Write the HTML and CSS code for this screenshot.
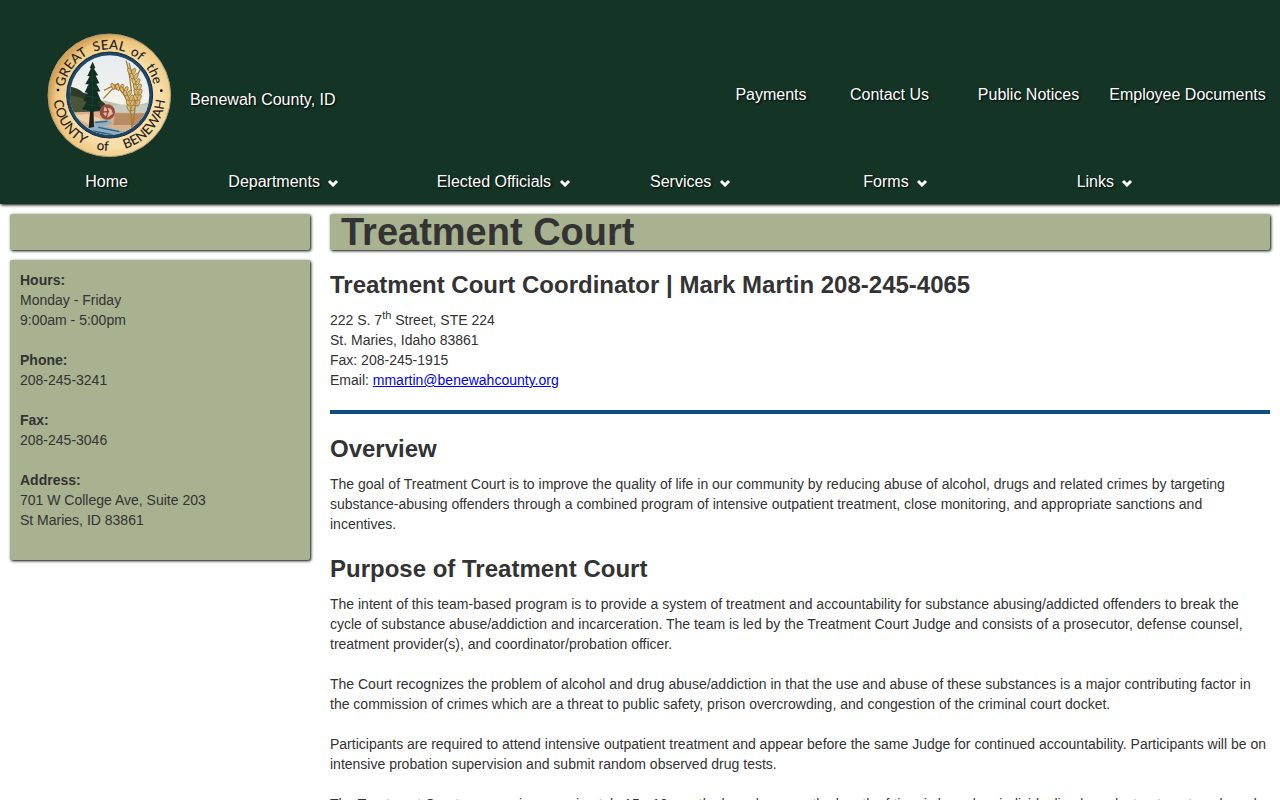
FILE: index.html
```html
<!DOCTYPE html>
<html lang="en">
<head>
<meta charset="utf-8">
<meta name="viewport" content="width=device-width, initial-scale=1">
<title>Treatment Court - Benewah County, ID</title>
<link rel="stylesheet" href="styles.css">
</head>
<body>
<header class="site-header">
  <div class="masthead">
    <a class="brand" href="#">
      <svg class="seal" viewBox="0 0 420 402" role="img" aria-label="Great Seal of the County of Benewah">
        <defs>
          <path id="arc-top" d="M71 201A137 137 0 0 1 345 201"/>
          <path id="arc-bottom" d="M40 201A168 168 0 0 0 376 201"/>
          <clipPath id="scene"><circle cx="209" cy="201" r="119"/></clipPath>
          <radialGradient id="gold" cx=".56" cy=".55" r=".55"><stop offset=".65" stop-color="#f7dfab"/><stop offset=".9" stop-color="#efc880"/><stop offset="1" stop-color="#d5a45c"/></radialGradient>
          <linearGradient id="sky" x2="0" y2="1"><stop offset="0" stop-color="#e6ecf2"/><stop offset=".6" stop-color="#f4f2ea"/></linearGradient>
          <g id="grain"><ellipse cx="-6" cy="0" rx="5" ry="10" transform="rotate(-25 -6 0)"/><ellipse cx="6" cy="0" rx="5" ry="10" transform="rotate(25 6 0)"/></g>
        </defs>
        <circle cx="208" cy="202" r="184" fill="url(#gold)" stroke="#a99a78" stroke-width="3"/>
        <circle cx="209" cy="201" r="129" fill="#1d4768" stroke="#16283a" stroke-width="3"/>
        <g clip-path="url(#scene)">
          <rect x="85" y="80" width="250" height="245" fill="url(#sky)"/>
          <path d="M80 235Q160 205 220 224T340 216V265H80Z" fill="#bdc5b0"/>
          <path d="M210 236Q270 222 340 236V270H205Z" fill="#c9cbc2"/>
          <path d="M80 174Q110 178 130 194Q170 201 197 229L180 250L80 258Z" fill="#2e3b28"/>
          <path d="M80 202Q130 204 180 238L160 252H80Z" fill="#4b5535"/>
          <path d="M80 253Q180 248 340 257V330H80Z" fill="#d7b28c"/>
          <path d="M95 262L145 258L190 276L150 292Z" fill="#eed0a8"/>
          <path d="M225 256H325L305 291H220Z" fill="#b78c65"/>
          <path d="M158 280L206 276L218 288L190 294L278 318L250 330H160L140 306Z" fill="#8ab0c5"/>
          <path d="M166 283L202 280M175 298L238 311M157 309L220 321" stroke="#315c75" stroke-width="4"/>
          <path d="M152 230H160L162 297L146 300Z" fill="#252018"/>
          <path d="M158 101L166 119L162 122L174 142L167 143L178 166L169 167L181 190L172 191L183 218L171 220L184 243L158 251L126 244L140 221L129 219L143 195L134 193L146 169L136 169L149 145L142 144L153 121L149 120Z" fill="#102e24"/>
          <path d="M157 116V241M148 150L169 157M142 176L174 182M138 204L177 211M135 230L178 234" stroke="#1d3c29" stroke-width="3"/>
          <g fill="none" stroke="#a77d35" stroke-width="4"><path d="M276 300Q298 205 267 105M276 298Q275 210 225 170L192 187M274 190Q267 120 258 98M290 145L306 115M220 180L190 212"/></g>
          <g fill="#dfba6a" stroke="#8a6a34" stroke-width="2">
            <use href="#grain" x="275" y="130"/><use href="#grain" x="282" y="145"/><use href="#grain" x="288" y="161"/><use href="#grain" x="292" y="177"/><use href="#grain" x="294" y="193"/><use href="#grain" x="292" y="209"/><use href="#grain" x="288" y="225"/>
            <use href="#grain" x="225" y="175"/><use href="#grain" x="239" y="178"/><use href="#grain" x="252" y="185"/><use href="#grain" x="262" y="196"/><use href="#grain" x="268" y="210"/><use href="#grain" x="271" y="225"/><use href="#grain" x="273" y="240"/>
          </g>
          <circle cx="202" cy="252" r="23" fill="#964c3b"/>
          <path d="M193 237L213 242L219 257L201 269L190 257Z" fill="#e6b8a2"/>
          <path d="M199 234L205 252M185 252L204 251L198 271" fill="none" stroke="#8a4638" stroke-width="4"/>
        </g>
        <g class="seal-text">
          <text><textPath href="#arc-top" startOffset="20%">GREAT</textPath></text>
          <text><textPath href="#arc-top" startOffset="50%">SEAL</textPath></text>
          <text><textPath href="#arc-top" startOffset="69%">of</textPath></text>
          <text><textPath href="#arc-top" startOffset="86%">the</textPath></text>
          <text><textPath href="#arc-bottom" startOffset="19%">COUNTY</textPath></text>
          <text><textPath href="#arc-bottom" startOffset="46%">of</textPath></text>
          <text><textPath href="#arc-bottom" startOffset="78%">BENEWAH</textPath></text>
        </g>
        <circle cx="54" cy="186" r="4"/><circle cx="364" cy="188" r="4"/>
      </svg>
      <span>Benewah County, ID</span>
    </a>
    <nav class="quick-links" aria-label="Quick links">
      <a href="#">Payments</a><a href="#">Contact Us</a><a href="#">Public Notices</a><a href="#">Employee Documents</a>
    </nav>
  </div>
  <nav class="main-nav" aria-label="Main">
    <a class="home" href="#">Home</a>
    <a class="departments" href="#">Departments <svg class="chevron" viewBox="0 0 12 8" aria-hidden="true"><path d="M2 2L6 6L10 2"/></svg></a>
    <a href="#">Elected Officials <svg class="chevron" viewBox="0 0 12 8" aria-hidden="true"><path d="M2 2L6 6L10 2"/></svg></a>
    <a href="#">Services <svg class="chevron" viewBox="0 0 12 8" aria-hidden="true"><path d="M2 2L6 6L10 2"/></svg></a>
    <a href="#">Forms <svg class="chevron" viewBox="0 0 12 8" aria-hidden="true"><path d="M2 2L6 6L10 2"/></svg></a>
    <a href="#">Links <svg class="chevron" viewBox="0 0 12 8" aria-hidden="true"><path d="M2 2L6 6L10 2"/></svg></a>
  </nav>
</header>
<div class="page">
  <aside class="sidebar">
    <div class="panel bar"></div>
    <div class="panel info">
      <p><strong>Hours:</strong><br>Monday - Friday<br>9:00am - 5:00pm</p>
      <p><strong>Phone:</strong><br>208-245-3241</p>
      <p><strong>Fax:</strong><br>208-245-3046</p>
      <p><strong>Address:</strong><br>701 W College Ave, Suite 203<br>St Maries, ID 83861</p>
    </div>
  </aside>
  <main class="content">
    <h1 class="panel bar">Treatment Court</h1>
    <h2>Treatment Court Coordinator | Mark Martin 208-245-4065</h2>
    <p>222 S. 7<sup>th</sup> Street, STE 224<br>St. Maries, Idaho 83861<br>Fax: 208-245-1915<br>Email: <a href="mailto:mmartin@benewahcounty.org">mmartin@benewahcounty.org</a></p>
    <hr>
    <h2>Overview</h2>
    <p>The goal of Treatment Court is to improve the quality of life in our community by reducing abuse of alcohol, drugs and related crimes by targeting substance-abusing offenders through a combined program of intensive outpatient treatment, close monitoring, and appropriate sanctions and incentives.</p>
    <h2>Purpose of Treatment Court</h2>
    <p>The intent of this team-based program is to provide a system of treatment and accountability for substance abusing/addicted offenders to break the cycle of substance abuse/addiction and incarceration. The team is led by the Treatment Court Judge and consists of a prosecutor, defense counsel, treatment provider(s), and coordinator/probation officer.</p>
    <p>The Court recognizes the problem of alcohol and drug abuse/addiction in that the use and abuse of these substances is a major contributing factor in the commission of crimes which are a threat to public safety, prison overcrowding, and congestion of the criminal court docket.</p>
    <p>Participants are required to attend intensive outpatient treatment and appear before the same Judge for continued accountability. Participants will be on intensive probation supervision and submit random observed drug tests.</p>
    <p>The Treatment Court program is approximately 15 - 18 months long, however the length of time is based on individualized needs, treatment goals and</p>
  </main>
</div>
</body>
</html>
```

FILE: styles.css
```css
* { box-sizing: border-box; }
html { height: 100%; overflow: hidden; }
body {
  margin: 0;
  height: 100%;
  overflow: hidden;
  background: #fff;
  color: #333;
  font: 14px/20px "Liberation Sans", Arial, sans-serif;
}
.site-header {
  background: #143426;
  padding-top: 28px;
  box-shadow: 1px 1px 3px #000;
  font-size: 16px;
}
.site-header a {
  color: #fff;
  text-decoration: none;
  text-shadow: 1px 1px 2px #000;
}
.masthead { display: flex; justify-content: space-between; }
.brand { display: flex; align-items: center; gap: 10px; padding-left: 40px; }
.brand span { padding-top: 10px; }
.seal { width: 140px; height: 134px; }
.seal-text {
  fill: #292217;
  font: 500 40px Lato, sans-serif;
  text-anchor: middle;
  text-shadow: none;
}
.quick-links {
  display: grid;
  grid-template-columns: 92px 145px 133px 185px;
  align-items: center;
  text-align: center;
}
.main-nav { display: grid; grid-template-columns: repeat(6, 1fr); padding: 10px 0 12px; }
.main-nav a { padding-left: 10px; white-space: nowrap; }
.main-nav .home { padding: 0; text-align: center; }
.main-nav .departments { padding-left: 15px; }
.chevron { width: 12px; height: 8px; margin-left: 3px; fill: none; stroke: #fff; stroke-width: 3; }
.page {
  display: grid;
  grid-template-columns: 300px 1fr;
  gap: 20px;
  padding: 10px;
}
.panel { background: #a8b190; border-radius: 2px; box-shadow: 1px 1px 3px #000; }
.bar { height: 36px; }
.info { margin-top: 10px; padding: 10px 10px 30px; }
.info p { margin: 0; }
.info p + p { margin-top: 20px; }
h1, h2, p { margin: 0; }
h1 { padding-left: 11px; font-size: 38px; line-height: 36px; }
h2 { padding-top: 20px; font-size: 24px; line-height: 30px; }
h2 + p { margin-top: 10px; }
p + p { margin-top: 20px; }
sup { font-size: 11px; line-height: 0; }
hr { height: 4px; margin: 20px 0 0; border: 0; background: #0c5080; }
```
